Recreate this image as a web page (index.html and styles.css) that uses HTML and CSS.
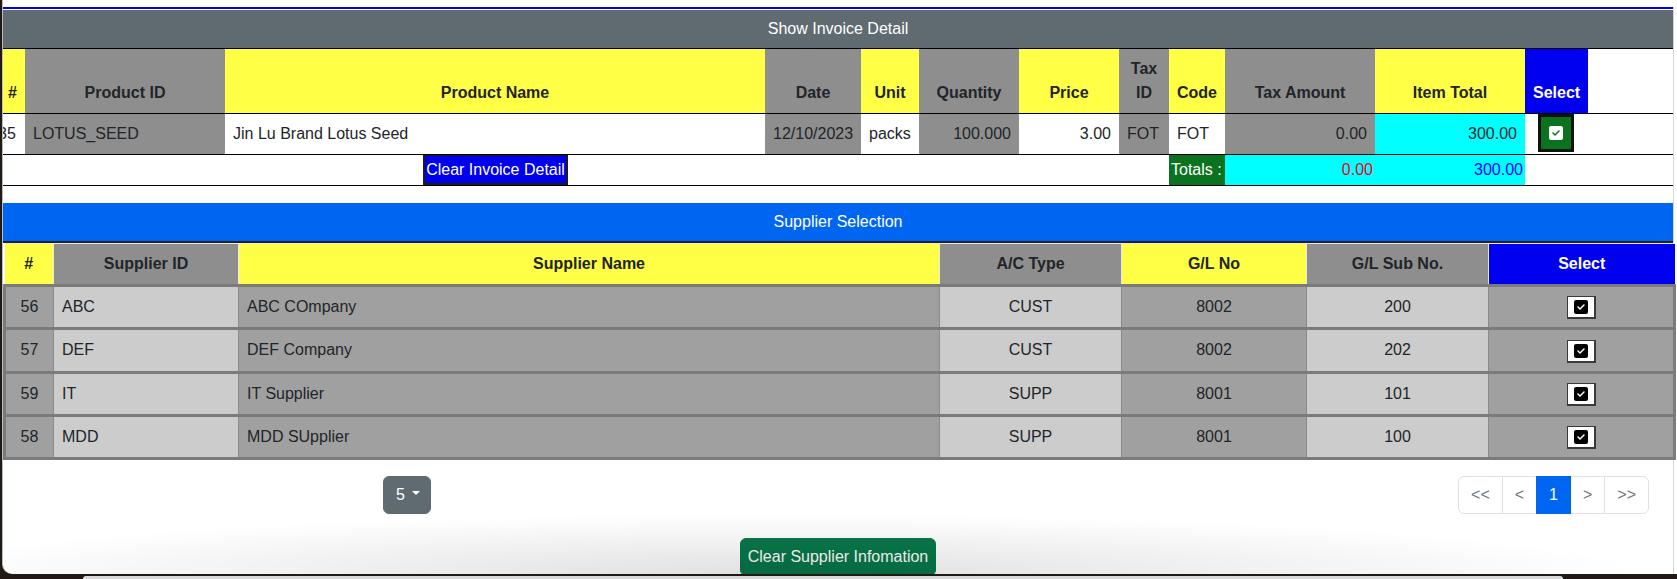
FILE: index.html
```html
<!DOCTYPE html>
<html>
<head>
<meta charset="utf-8">
<link rel="stylesheet" href="styles.css">
</head>
<body>
<div class="window">
  <div class="content">
    <div class="rule"></div>
    <section class="invoice">
      <div class="bar bar-gray">Show Invoice Detail</div>
      <div class="clip">
        <table class="inv">
          <colgroup>
            <col style="width:35px"><col style="width:200px"><col style="width:540px"><col style="width:96px"><col style="width:58px"><col style="width:100px"><col style="width:100px"><col style="width:50px"><col style="width:56px"><col style="width:150px"><col style="width:150px"><col style="width:63px"><col style="width:85px">
          </colgroup>
          <thead>
            <tr>
              <th class="y hnum">#</th>
              <th class="g">Product ID</th>
              <th class="y">Product Name</th>
              <th class="g">Date</th>
              <th class="y">Unit</th>
              <th class="g">Quantity</th>
              <th class="y">Price</th>
              <th class="g">Tax ID</th>
              <th class="y">Code</th>
              <th class="g">Tax Amount</th>
              <th class="y">Item Total</th>
              <th class="b">Select</th>
              <th class="w"></th>
            </tr>
          </thead>
          <tbody>
            <tr class="data">
              <td class="w">35</td>
              <td class="g">LOTUS_SEED</td>
              <td class="w">Jin Lu Brand Lotus Seed</td>
              <td class="g">12/10/2023</td>
              <td class="w">packs</td>
              <td class="g r">100.000</td>
              <td class="w r">3.00</td>
              <td class="g">FOT</td>
              <td class="w">FOT</td>
              <td class="g r">0.00</td>
              <td class="c r">300.00</td>
              <td class="w sel">
                <button class="chk-green" type="button">
                  <svg width="14" height="16" viewBox="0 0 448 512"><path fill="#fff" fill-rule="evenodd" d="M64 32C28.7 32 0 60.7 0 96V416c0 35.3 28.7 64 64 64H384c35.3 0 64-28.7 64-64V96c0-35.3-28.7-64-64-64H64zM337 209L209 337c-9.4 9.4-24.6 9.4-33.9 0l-64-64c-9.4-9.4-9.4-24.6 0-33.9s24.6-9.4 33.9 0l47 47L303 175c9.4-9.4 24.6-9.4 33.9 0s9.4 24.6 0 33.9z"/></svg>
                </button>
              </td>
              <td class="w"></td>
            </tr>
            <tr class="tot">
              <td colspan="2"></td>
              <td class="btncell"><button class="clr-inv" type="button">Clear Invoice Detail</button></td>
              <td colspan="5"></td>
              <td class="gr">Totals :</td>
              <td class="c r red">0.00</td>
              <td class="c r blue">300.00</td>
              <td colspan="2"></td>
            </tr>
          </tbody>
        </table>
      </div>
    </section>

    <section class="supplier">
      <div class="bar bar-blue">Supplier Selection</div>
      <table class="sup">
        <colgroup>
          <col style="width:49px"><col style="width:185px"><col style="width:701px"><col style="width:182px"><col style="width:185px"><col style="width:182px"><col style="width:186px">
        </colgroup>
        <thead>
          <tr>
            <th class="y">#</th>
            <th class="g">Supplier ID</th>
            <th class="y">Supplier Name</th>
            <th class="g">A/C Type</th>
            <th class="y">G/L No</th>
            <th class="g">G/L Sub No.</th>
            <th class="b">Select</th>
          </tr>
        </thead>
        <tbody>
          <tr>
            <td class="m ctr">56</td><td class="l">ABC</td><td class="m">ABC COmpany</td><td class="l ctr">CUST</td><td class="m ctr">8002</td><td class="l ctr">200</td>
            <td class="m ctr"><button class="chk" type="button"><svg width="14" height="16" viewBox="0 0 448 512"><path fill="#000" fill-rule="evenodd" d="M64 32C28.7 32 0 60.7 0 96V416c0 35.3 28.7 64 64 64H384c35.3 0 64-28.7 64-64V96c0-35.3-28.7-64-64-64H64zM337 209L209 337c-9.4 9.4-24.6 9.4-33.9 0l-64-64c-9.4-9.4-9.4-24.6 0-33.9s24.6-9.4 33.9 0l47 47L303 175c9.4-9.4 24.6-9.4 33.9 0s9.4 24.6 0 33.9z"/></svg></button></td>
          </tr>
          <tr>
            <td class="m ctr">57</td><td class="l">DEF</td><td class="m">DEF Company</td><td class="l ctr">CUST</td><td class="m ctr">8002</td><td class="l ctr">202</td>
            <td class="m ctr"><button class="chk" type="button"><svg width="14" height="16" viewBox="0 0 448 512"><path fill="#000" fill-rule="evenodd" d="M64 32C28.7 32 0 60.7 0 96V416c0 35.3 28.7 64 64 64H384c35.3 0 64-28.7 64-64V96c0-35.3-28.7-64-64-64H64zM337 209L209 337c-9.4 9.4-24.6 9.4-33.9 0l-64-64c-9.4-9.4-9.4-24.6 0-33.9s24.6-9.4 33.9 0l47 47L303 175c9.4-9.4 24.6-9.4 33.9 0s9.4 24.6 0 33.9z"/></svg></button></td>
          </tr>
          <tr>
            <td class="m ctr">59</td><td class="l">IT</td><td class="m">IT Supplier</td><td class="l ctr">SUPP</td><td class="m ctr">8001</td><td class="l ctr">101</td>
            <td class="m ctr"><button class="chk" type="button"><svg width="14" height="16" viewBox="0 0 448 512"><path fill="#000" fill-rule="evenodd" d="M64 32C28.7 32 0 60.7 0 96V416c0 35.3 28.7 64 64 64H384c35.3 0 64-28.7 64-64V96c0-35.3-28.7-64-64-64H64zM337 209L209 337c-9.4 9.4-24.6 9.4-33.9 0l-64-64c-9.4-9.4-9.4-24.6 0-33.9s24.6-9.4 33.9 0l47 47L303 175c9.4-9.4 24.6-9.4 33.9 0s9.4 24.6 0 33.9z"/></svg></button></td>
          </tr>
          <tr>
            <td class="m ctr">58</td><td class="l">MDD</td><td class="m">MDD SUpplier</td><td class="l ctr">SUPP</td><td class="m ctr">8001</td><td class="l ctr">100</td>
            <td class="m ctr"><button class="chk" type="button"><svg width="14" height="16" viewBox="0 0 448 512"><path fill="#000" fill-rule="evenodd" d="M64 32C28.7 32 0 60.7 0 96V416c0 35.3 28.7 64 64 64H384c35.3 0 64-28.7 64-64V96c0-35.3-28.7-64-64-64H64zM337 209L209 337c-9.4 9.4-24.6 9.4-33.9 0l-64-64c-9.4-9.4-9.4-24.6 0-33.9s24.6-9.4 33.9 0l47 47L303 175c9.4-9.4 24.6-9.4 33.9 0s9.4 24.6 0 33.9z"/></svg></button></td>
          </tr>
        </tbody>
      </table>

      <div class="controls">
        <button class="dd" type="button">5<span class="caret"></span></button>
        <ul class="pager">
          <li class="pg">&lt;&lt;</li>
          <li class="pg">&lt;</li>
          <li class="pg active">1</li>
          <li class="pg">&gt;</li>
          <li class="pg">&gt;&gt;</li>
        </ul>
      </div>
      <div class="actions">
        <button class="clr-sup" type="button">Clear Supplier Infomation</button>
      </div>
    </section>
  </div>
  <div class="shade"></div>
</div>
<div class="dock"><div class="peek"></div></div>
</body>
</html>
```
FILE: styles.css
```css
* { box-sizing: border-box; }
html, body { margin: 0; padding: 0; }
body {
  width: 1677px;
  height: 579px;
  overflow: hidden;
  background: #211914;
  font-family: "Liberation Sans", Arial, Helvetica, sans-serif;
  font-size: 16px;
  line-height: 24px;
  color: #212529;
}
.window {
  position: relative;
  margin-left: 2px;
  width: 1675px;
  height: 574px;
  background: #fff;
  border-left: 1px solid #bdbdbd;
  border-bottom-left-radius: 10px;
  overflow: hidden;
}
.content {
  width: 1671px;
  height: 100%;
  border-right: 1px solid #d6d6d6;
}
.rule {
  margin-top: 7px;
  height: 2px;
  background: #0000ee;
  margin-bottom: 1px;
}
.bar {
  height: 38px;
  display: flex;
  align-items: center;
  justify-content: center;
  color: #fff;
}
.bar-gray { background: #5f6b71; }
.bar-blue {
  background: #0066f2;
  height: 40px;
  border-bottom: 2px solid #222;
  margin-top: 17px;
}
.clip { overflow: hidden; width: 1670px; }

/* colours */
.y { background: #ffff45; }
.g { background: #8e8e8e; }
.w { background: #fff; }
.b { background: #0000f0; color: #fff; }
.c { background: #00ffff; }
.gr { background: #0b7320; color: #fff; }
.r { text-align: right; }
.ctr { text-align: center; }
.red { color: #f0001e; }
.blue { color: #0000ff; }

/* invoice table */
.inv {
  margin-left: -13px;
  width: 1683px;
  table-layout: fixed;
  border-collapse: collapse;
  border-top: 1px solid #000;
}
.inv tr { border-bottom: 1px solid #000; }
.inv th {
  padding: 8px;
  vertical-align: bottom;
  text-align: center;
  font-weight: bold;
}
.inv th.hnum { text-align: right; }
.inv th.b { color: #fff; }
.inv td {
  padding: 8px;
  vertical-align: middle;
  white-space: nowrap;
}
.inv td.sel { padding: 0; vertical-align: top; text-align: center; }
.chk-green {
  width: 36px;
  height: 38px;
  margin: 0 0 0 -1px;
  padding: 0;
  background: #0b7320;
  border: 3px solid #111;
  display: inline-flex;
  align-items: center;
  justify-content: center;
}
.chk-green svg { display: block; }
.inv .tot td { padding: 3px 2px; }
.inv .tot td.btncell { padding: 0 0 0 1px; text-align: center; vertical-align: bottom; }
.clr-inv {
  height: 30px;
  margin: 0;
  padding: 0 1px;
  font-family: inherit;
  font-size: 16px;
  line-height: 24px;
  color: #fff;
  background: #0000ee;
  border: 2px solid #1c1c1c;
  border-top-width: 1px;
  vertical-align: bottom;
}

/* supplier table */
.sup {
  width: 1670px;
  table-layout: fixed;
  border-collapse: collapse;
}
.sup th {
  padding: 8px;
  text-align: center;
  font-weight: bold;
  border-top: 1px solid #e8e8e8;
  border-left: 1px solid #e8e8e8;
  border-right: 1px solid #e8e8e8;
}
.sup th:first-child { border-left: 0; }
.sup th:last-child { border-right: 0; }
.sup td {
  padding: 8px;
  vertical-align: middle;
  border-left: 1px solid #8a8a8a;
  border-right: 1px solid #8a8a8a;
  border-top: 3px solid #7b7b7b;
  border-bottom: 3px solid #7b7b7b;
  white-space: nowrap;
}
.sup td:first-child { border-left: 3px solid #7b7b7b; }
.sup td:last-child { border-right: 3px solid #7b7b7b; }
.sup td.m { background: #a0a0a0; }
.sup td.l { background: #cccccc; }
.chk {
  width: 29px;
  height: 23px;
  margin: 0;
  padding: 0;
  background: #fff;
  border: 1px solid #3a3a3a;
  border-right-width: 2px;
  border-bottom-width: 2px;
  display: inline-flex;
  align-items: center;
  justify-content: center;
  vertical-align: middle;
}
.chk svg { display: block; }

/* controls */
.controls {
  margin-top: 16px;
  display: flex;
  justify-content: space-between;
  align-items: center;
  padding: 0 24px 0 380px;
}
.dd {
  height: 38px;
  width: 48px;
  padding: 6px 10px 6px 12px;
  margin: 0;
  font-family: inherit;
  font-size: 16px;
  line-height: 24px;
  color: #fff;
  background: #5f6b71;
  border: 1px solid #5f6b71;
  border-radius: 6px;
  display: inline-flex;
  align-items: center;
}
.caret {
  display: inline-block;
  margin-left: 7px;
  margin-top: -5px;
  border-top: 4px solid #fff;
  border-left: 4px solid transparent;
  border-right: 4px solid transparent;
}
.pager {
  list-style: none;
  margin: 0;
  padding: 0;
  display: flex;
}
.pg {
  height: 38px;
  padding: 6px 12px;
  border: 1px solid #dee2e6;
  margin-left: -1px;
  color: #6c757d;
  background: #fff;
}
.pg:first-child { margin-left: 0; border-radius: 6px 0 0 6px; }
.pg:last-child { border-radius: 0 6px 6px 0; }
.pg.active {
  background: #0066f2;
  border-color: #0066f2;
  color: #fff;
  position: relative;
}
.actions {
  margin-top: 24px;
  display: flex;
  justify-content: center;
}
.clr-sup {
  height: 38px;
  padding: 6px 7px;
  margin: 0;
  font-family: inherit;
  font-size: 16px;
  line-height: 24px;
  color: #fff;
  background: #08784a;
  border: 1px solid #08784a;
  border-radius: 6px;
}

/* bottom shading over the window */
.shade {
  position: absolute;
  left: 0;
  right: 0;
  bottom: 0;
  height: 60px;
  pointer-events: none;
  background: radial-gradient(ellipse 52% 100% at 46% 100%, rgba(0,0,0,0.12), rgba(0,0,0,0) 100%);
}

/* strip below the window */
.dock {
  height: 5px;
  padding: 2px 0 0 83px;
}
.peek {
  width: 1480px;
  height: 3px;
  background: #d9d9d9;
  border-radius: 8px 8px 0 0;
}
```
